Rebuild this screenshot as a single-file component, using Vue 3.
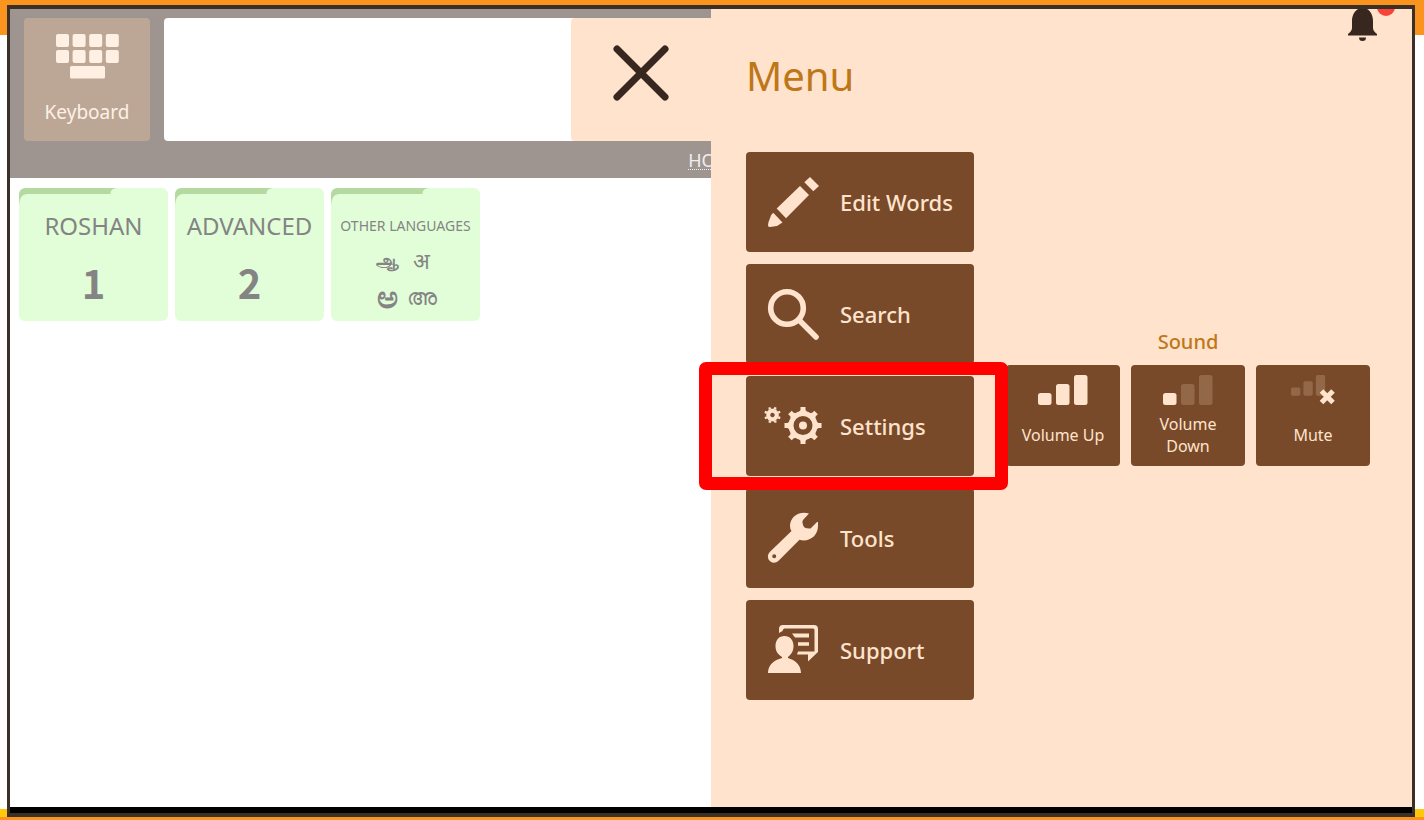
<template>
    <main class="page">
        <div class="frame">
            <div class="stage">
                <div class="board">
                    <header class="topbar">
                        <div class="toolbar">
                            <button type="button" class="key-btn">
                                <svg width="63" height="45" viewBox="0 0 63 45" aria-hidden="true">
                                    <template v-for="row in 2" :key="row">
                                        <rect
                                            v-for="col in 4"
                                            :key="col"
                                            :x="(col - 1) * 16.6"
                                            :y="(row - 1) * 16"
                                            width="13"
                                            height="13"
                                            rx="2"
                                        />
                                    </template>
                                    <rect x="14" y="32" width="35" height="12.5" rx="1.5" />
                                </svg>
                                <span>Keyboard</span>
                            </button>
                            <input v-model="message" class="message" type="text" aria-label="Message" />
                        </div>
                        <div class="crumbs"><a href="#">HOME</a></div>
                    </header>

                    <div class="tiles">
                        <button v-for="tile in tiles" :key="tile.title" type="button" class="tile">
                            <svg class="tab" viewBox="0 0 150 17" preserveAspectRatio="none" aria-hidden="true">
                                <path d="M0 17V5Q0 0 6 0H98Q92 1 92 6H8Q1 6 0 17Z" />
                            </svg>
                            <span class="tile-title" :class="{ small: tile.letters }">{{ tile.title }}</span>
                            <span v-if="tile.letters" class="letters">
                                <span v-for="letter in tile.letters" :key="letter.lang" :lang="letter.lang" :class="letter.lang">
                                    {{ letter.text }}
                                </span>
                            </span>
                            <span v-else class="number">{{ tile.number }}</span>
                        </button>
                    </div>
                </div>

                <aside class="drawer">
                    <button type="button" class="close" aria-label="Close">
                        <svg width="56" height="56" viewBox="0 0 56 56" aria-hidden="true">
                            <path d="M4 4L52 52M52 4L4 52" />
                        </svg>
                    </button>

                    <button type="button" class="bell" aria-label="Notifications">
                        <svg width="50" height="36" viewBox="0 0 50 36" aria-hidden="true">
                            <path
                                d="M15 -1C8 -1 4 5 4 12V19Q4 22 0 25V26.500H29V25Q25 22 25 19V12C25 5 21 -1 15 -1ZM11 28.500H18Q18 32 14.500 32T11 28.500Z"
                            />
                            <circle class="dot" cx="38" cy="-2" r="9" />
                        </svg>
                    </button>

                    <h1>Menu</h1>

                    <div class="drawer-body">
                        <nav class="menu">
                            <div v-for="item in items" :key="item.id" class="menu-item">
                                <button type="button" class="menu-btn">
                                    <svg class="icon" width="50" height="50" viewBox="0 0 50 50" aria-hidden="true">
                                        <g v-if="item.id === 'edit'">
                                            <path d="M42 0L51 9L45.300 14.300L36.300 5.300Z" />
                                            <path d="M32 9L41 18L18 41.300L8.700 31.600Z" />
                                            <path d="M5.500 36Q4 36 3 38.500L.4 45.500L0 48.500Q.2 50 2 50L9 49L14.500 45.500Z" />
                                        </g>
                                        <g v-else-if="item.id === 'search'" class="line">
                                            <circle cx="19" cy="19" r="16.300" stroke-width="5.600" />
                                            <path d="M31 31L48 48" stroke-width="5.600" />
                                        </g>
                                        <g v-else-if="item.id === 'settings'">
                                            <g v-for="gear in gears" :key="gear.name" :transform="gear.place">
                                                <circle class="ring" :r="gear.radius" :stroke-width="gear.stroke" />
                                                <circle v-if="gear.hub" r="4" />
                                                <path
                                                    v-for="n in 8"
                                                    :key="n"
                                                    d="M-4 -13.500L-2.500 -15.500V-18.500H2.500V-15.500L4 -13.500Z"
                                                    :transform="`rotate(${n * 45})`"
                                                />
                                            </g>
                                        </g>
                                        <path
                                            v-else-if="item.id === 'tools'"
                                            fill-rule="evenodd"
                                            d="M41 .6C31 -2.500 22 4 22 13Q22 16 23.500 18L1.800 39A6 6 0 0 0 10.300 48L31.500 26.800C41 29.500 50 23 50 13V9H49L42.500 15.500Q36 16 35 12Q33.500 9 35 7ZM6.200 41.300A2 2 0 1 0 6.200 45.300A2 2 0 1 0 6.200 41.300Z"
                                        />
                                        <g v-else>
                                            <path d="M0 48C0 40 6 35 14 33V32C9 29 7.500 25 7.500 21C7.500 15 11 11 16.500 11S25.500 15 25.500 21C25.500 25 24 29 20 32V33C27 35 33 40 33 48Z" />
                                            <path d="M11 8V4Q11 0 15 0H46Q50 0 50 4V27L40 36.500V29.500H29L30 26.500H46.500V5Q46.500 3.500 45 3.500H16.500Q15 3.500 14.500 6Z" />
                                            <path d="M24 8.500H41V12.500H27ZM30 17.300H41V20.700H30Z" />
                                        </g>
                                    </svg>
                                    <span>{{ item.label }}</span>
                                </button>
                                <div v-if="item.id === active" class="highlight"></div>
                            </div>
                        </nav>

                        <section class="sound" aria-labelledby="sound-title">
                            <h2 id="sound-title">Sound</h2>
                            <div class="sound-row">
                                <button v-for="s in sounds" :key="s.label" type="button" class="sound-btn">
                                    <svg width="50" height="30" viewBox="0 0 50 30" aria-hidden="true">
                                        <g :transform="s.muted ? 'translate(3) scale(.69)' : undefined">
                                            <rect
                                                v-for="(bar, i) in bars"
                                                :key="i"
                                                :class="{ faded: i >= s.level }"
                                                :x="bar.x"
                                                :y="30 - bar.h"
                                                :height="bar.h"
                                                width="13.500"
                                                rx="2.500"
                                            />
                                        </g>
                                        <path v-if="s.muted" class="mute" d="M33.500 16L45 27.500M45 16L33.500 27.500" />
                                    </svg>
                                    <span>{{ s.label }}</span>
                                </button>
                            </div>
                        </section>
                    </div>
                </aside>
            </div>
            <div class="base"></div>
        </div>
    </main>
</template>

<script setup>
import { ref } from "vue";

const message = ref("");
const active = ref("settings");

const tiles = [
    { title: "ROSHAN", number: 1 },
    { title: "ADVANCED", number: 2 },
    {
        title: "OTHER LANGUAGES",
        letters: [
            { lang: "ta", text: "ஆ" },
            { lang: "hi", text: "अ" },
            { lang: "kn", text: "ಅ" },
            { lang: "ml", text: "അ" },
        ],
    },
];

const items = [
    { id: "edit", label: "Edit Words" },
    { id: "search", label: "Search" },
    { id: "settings", label: "Settings" },
    { id: "tools", label: "Tools" },
    { id: "support", label: "Support" },
];

const gears = [
    { name: "small", place: "translate(4.5 14) rotate(22) scale(.45)", radius: 9.5, stroke: 9, hub: false },
    { name: "large", place: "translate(35 24.5)", radius: 12, stroke: 5, hub: true },
];

const bars = [
    { x: 0, h: 12 },
    { x: 18, h: 21 },
    { x: 36, h: 30 },
];

const sounds = [
    { label: "Volume Up", level: 3 },
    { label: "Volume Down", level: 1 },
    { label: "Mute", level: 0, muted: true },
];
</script>

<style>
body {
    margin: 0;
}
</style>

<style scoped>
.page {
    display: flex;
    min-height: 100vh;
    box-sizing: border-box;
    padding: 5px 9px 3px 7px;
    background: linear-gradient(
        to bottom,
        #fa941e 35px,
        #fff 35px,
        #fff calc(100% - 11px),
        #ffc90a calc(100% - 11px),
        #ffc90a calc(100% - 3px),
        #fa941e calc(100% - 3px)
    );
    font-family: "Noto Sans", "Open Sans", sans-serif;
}

button {
    border: 0;
    padding: 0;
    margin: 0;
    font: inherit;
    cursor: pointer;
}

svg {
    display: block;
    fill: currentColor;
}

.frame {
    flex: 1;
    display: flex;
    flex-direction: column;
    min-width: 0;
    border: solid #3b3028;
    border-width: 4px 3px;
}

.stage {
    position: relative;
    flex: 1;
    overflow: hidden;
    background: #fff;
}

.base {
    height: 6px;
    background: #000;
}

.topbar {
    background: #9f9590;
}

.toolbar {
    display: flex;
    gap: 14px;
    padding: 9px 14px 0;
}

.key-btn {
    display: flex;
    flex-direction: column;
    align-items: center;
    gap: 20px;
    width: 126px;
    height: 123px;
    padding-top: 16px;
    box-sizing: border-box;
    border-radius: 4px;
    background: #bca797;
    color: #fff0e3;
    font-size: 19px;
    line-height: 26px;
}

.message {
    flex: 1;
    min-width: 0;
    box-sizing: border-box;
    border: 0;
    border-radius: 4px;
    background: #fff;
    font: inherit;
}

.crumbs {
    display: flex;
    justify-content: center;
    height: 37px;
    padding-left: 8px;
    line-height: 38px;
    font-size: 18px;
}

.crumbs a {
    color: #f0eeed;
    text-decoration: underline dotted 1px;
    text-underline-offset: 2px;
}

.tiles {
    display: flex;
    gap: 7px;
    padding: 10px 9px;
}

.tile {
    position: relative;
    display: flex;
    flex-direction: column;
    align-items: center;
    width: 149px;
    height: 133px;
    padding-top: 22px;
    border-radius: 6px;
    overflow: hidden;
    background: #e2fed8;
    color: #848484;
}

.tab {
    position: absolute;
    top: 0;
    left: 0;
    width: 100%;
    height: 17px;
    color: #b5daa1;
}

.tile-title {
    font-size: 24px;
    line-height: 32px;
    white-space: nowrap;
}

.tile-title.small {
    font-size: 14px;
}

.number {
    margin-top: 16px;
    font-family: "Noto Sans CJK SC", sans-serif;
    font-weight: 700;
    font-size: 40px;
    line-height: 48px;
}

.letters {
    display: grid;
    grid-template-columns: 32px 36px;
    grid-auto-rows: 36px;
    justify-items: center;
    align-items: center;
    font-size: 22px;
    line-height: 36px;
}

.ta {
    font-size: 18px;
    font-weight: 700;
}

.kn {
    font-size: 32px;
    font-weight: 700;
}

.drawer {
    position: absolute;
    top: 0;
    right: 0;
    bottom: 0;
    width: 50%;
    box-sizing: border-box;
    padding: 40px 35px 0;
    background: #ffe3cd;
}

.close {
    position: absolute;
    top: 9px;
    right: 100%;
    display: flex;
    align-items: center;
    justify-content: center;
    width: 140px;
    height: 123px;
    padding-bottom: 14px;
    border-radius: 4px 0 0 4px;
    background: #ffe3cd;
    color: #38271e;
}

.close path {
    stroke: currentColor;
    stroke-width: 7;
    stroke-linecap: round;
}

.bell {
    position: absolute;
    top: 0;
    right: 14px;
    background: none;
    color: #38271e;
}

.dot {
    fill: #f84437;
}

h1,
h2 {
    margin: 0;
    color: #be7718;
    font-weight: 500;
}

h1 {
    font-size: 40px;
    line-height: 54px;
    font-weight: 400;
}

.drawer-body {
    display: flex;
    justify-content: space-between;
    padding: 49px 7px 0 0;
}

.menu {
    display: flex;
    flex-direction: column;
    gap: 12px;
}

.menu-item {
    position: relative;
}

.menu-btn {
    display: flex;
    align-items: center;
    gap: 22px;
    width: 228px;
    height: 100px;
    padding-left: 22px;
    border-radius: 4px;
    background: #784a29;
    color: #ffe3cd;
    font-size: 22px;
    font-weight: 500;
}

.icon {
    flex: none;
    overflow: visible;
}

.line,
.ring {
    fill: none;
    stroke: currentColor;
    stroke-linecap: round;
}

.highlight {
    position: absolute;
    z-index: 1;
    inset: -14px -34px -14px -47px;
    border: 13px solid #f00;
    border-radius: 7px;
    pointer-events: none;
}

.sound {
    margin-top: 176px;
}

h2 {
    font-size: 20px;
    line-height: 28px;
    text-align: center;
}

.sound-row {
    display: flex;
    gap: 11px;
    margin-top: 9px;
}

.sound-btn {
    display: flex;
    flex-direction: column;
    align-items: center;
    width: 114px;
    height: 101px;
    padding: 10px 12px 2px;
    border-radius: 4px;
    background: #784a29;
    color: #ffe3cd;
    font-size: 16px;
    line-height: 22px;
}

.sound-btn span {
    flex: 1;
    display: flex;
    align-items: center;
}

.faded {
    opacity: 0.2;
}

.mute {
    stroke: currentColor;
    stroke-width: 5;
}
</style>
